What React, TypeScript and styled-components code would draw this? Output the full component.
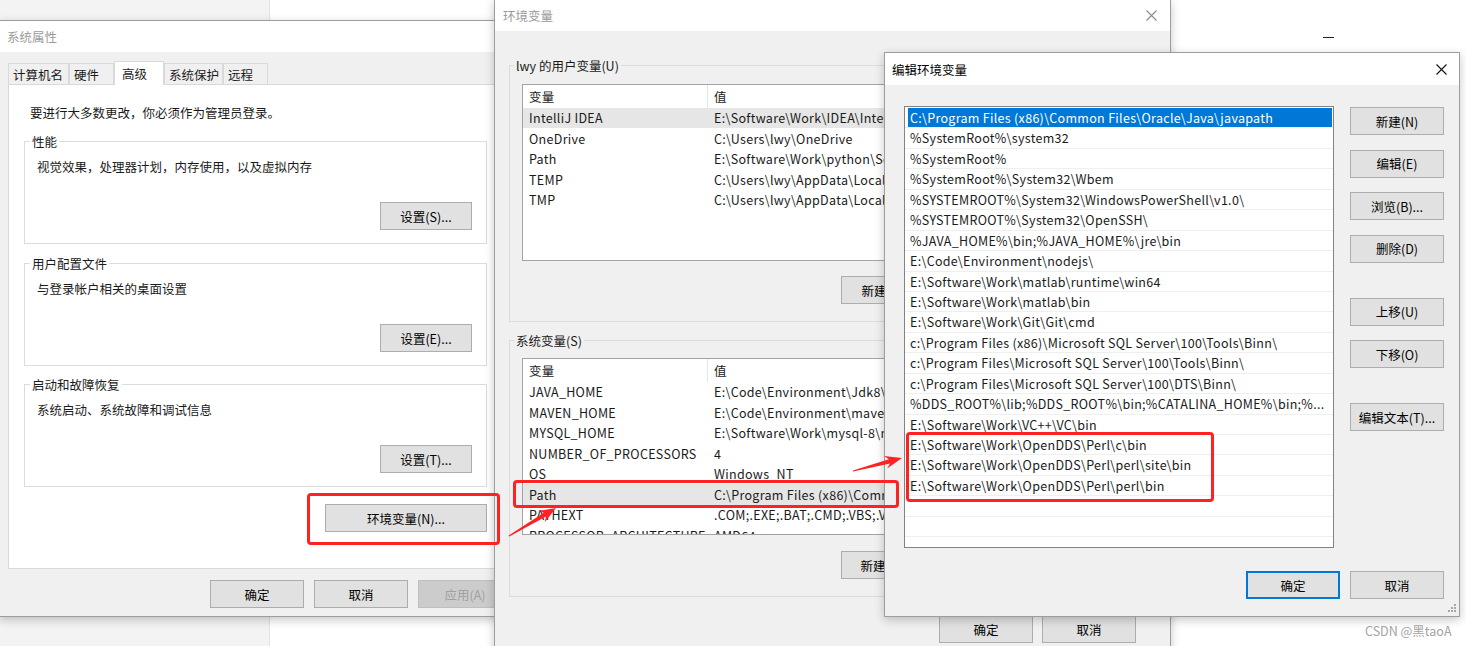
import React from "react";
import styled, { createGlobalStyle, css } from "styled-components";

const FONT = `"Noto Sans CJK SC", "Noto Sans", sans-serif`;

const GlobalStyle = createGlobalStyle`
  html, body { margin: 0; padding: 0; background: #fff; }
  body { font-family: ${FONT}; font-size: 12.5px; color: #1a1a1a; overflow: hidden; }
  #root { width: 1466px; height: 646px; }
  *, *::before, *::after { box-sizing: border-box; }
`;

/* Windows paths written with "/" and shown with "\" */
const w = (s: string) => s.replace(/\//g, "\\");

const Desktop = styled.div`
  position: relative;
  width: 1466px;
  height: 646px;
  overflow: hidden;
  background: #fff;
`;

/* ---------- background window ---------- */
const BackWindow = styled.div`
  position: absolute;
  inset: 0;
  display: flex;
`;
const BackSidebar = styled.div`
  width: 270px;
  background: #f3f3f3;
  border-right: 1px solid #e2e2e2;
`;
const BackMain = styled.div`
  flex: 1;
  display: flex;
  justify-content: flex-end;
  align-items: flex-start;
  padding: 37px 132px 0 0;
`;
const MinimizeGlyph = styled.div`
  width: 11px;
  height: 1px;
  background: #222;
`;

/* ---------- generic window ---------- */
const Window = styled.div<{ $x: number; $y: number; $w: number; $h: number; $z: number }>`
  position: absolute;
  left: ${(p) => p.$x}px;
  top: ${(p) => p.$y}px;
  width: ${(p) => p.$w}px;
  height: ${(p) => p.$h}px;
  z-index: ${(p) => p.$z};
  background: #f0f0f0;
  border: 1px solid #9d9d9d;
  box-shadow: 0 3px 9px rgba(0, 0, 0, 0.22);
  display: flex;
  flex-direction: column;
`;
const TitleBar = styled.div<{ $h: number; $pl: number; $pr: number }>`
  flex-shrink: 0;
  height: ${(p) => p.$h}px;
  background: #fff;
  display: flex;
  align-items: center;
  justify-content: space-between;
  padding: 0 ${(p) => p.$pr}px 0 ${(p) => p.$pl}px;
`;
const TitleText = styled.span<{ $active?: boolean }>`
  color: ${(p) => (p.$active ? "#000" : "#9a9a9a")};
  font-size: 12.5px;
  line-height: 17px;
`;
const CloseSvg = styled.svg`
  display: block;
  flex-shrink: 0;
`;
const CloseIcon = ({ color }: { color: string }) => (
  <CloseSvg width="11" height="11" viewBox="0 0 11 11">
    <path d="M0.5 0.5 L10.5 10.5 M10.5 0.5 L0.5 10.5" stroke={color} strokeWidth="1.1" fill="none" />
  </CloseSvg>
);

const Body = styled.div<{ $pad: string }>`
  flex: 1;
  display: flex;
  flex-direction: column;
  padding: ${(p) => p.$pad};
  min-height: 0;
`;

const Btn = styled.button<{ $w?: number; $default?: boolean }>`
  flex-shrink: 0;
  width: ${(p) => p.$w ?? 94}px;
  height: 28px;
  padding: 0;
  margin: 0;
  font-family: ${FONT};
  font-size: 12.5px;
  color: #000;
  background: #e1e1e1;
  border: 1px solid #adadad;
  ${(p) =>
    p.$default &&
    css`
      border-color: #0078d7;
      box-shadow: inset 0 0 0 1px #0078d7;
    `}
  &:disabled {
    background: #cccccc;
    border-color: #bfbfbf;
    color: #a0a0a0;
  }
`;

const ButtonBar = styled.div<{ $mt: number; $pr: number; $gap: number }>`
  display: flex;
  justify-content: flex-end;
  gap: ${(p) => p.$gap}px;
  margin-top: ${(p) => p.$mt}px;
  padding-right: ${(p) => p.$pr}px;
`;

const Group = styled.fieldset<{ $pad: string; $mt: number }>`
  margin: ${(p) => p.$mt}px 0 0 0;
  min-width: 0;
  padding: ${(p) => p.$pad};
  border: 1px solid #dcdcdc;
  display: flex;
  flex-direction: column;
`;
const Legend = styled.legend<{ $shift: number }>`
  padding: 0 2px;
  margin-left: ${(p) => p.$shift}px;
  line-height: 17px;
  font-size: 12.5px;
  color: #1a1a1a;
`;

/* ---------- window 1: 系统属性 ---------- */
const TabStrip = styled.div`
  display: flex;
  align-items: flex-end;
  height: 23px;
`;
const Tab = styled.div<{ $w: number; $active?: boolean }>`
  width: ${(p) => p.$w}px;
  height: ${(p) => (p.$active ? 24 : 21)}px;
  margin-bottom: ${(p) => (p.$active ? -1 : 0)}px;
  padding-left: ${(p) => (p.$active ? 7 : 4)}px;
  background: ${(p) => (p.$active ? "#fff" : "#f0f0f0")};
  border: 1px solid #d9d9d9;
  border-bottom: none;
  display: flex;
  align-items: center;
  white-space: nowrap;
  position: relative;
  z-index: ${(p) => (p.$active ? 2 : 0)};
`;
const TabPanel = styled.div`
  height: 485px;
  background: #fff;
  border: 1px solid #d9d9d9;
  padding: 19px 32px 0 15px;
  display: flex;
  flex-direction: column;
`;
const Line = styled.div<{ $mt?: number; $ml?: number }>`
  line-height: 17px;
  margin-top: ${(p) => p.$mt ?? 0}px;
  margin-left: ${(p) => p.$ml ?? 0}px;
  white-space: nowrap;
`;
const RightRow = styled.div<{ $mt: number }>`
  display: flex;
  justify-content: flex-end;
  margin-top: ${(p) => p.$mt}px;
`;

/* ---------- window 2: 环境变量 ---------- */
const VarList = styled.div<{ $mt: number }>`
  margin-top: ${(p) => p.$mt}px;
  height: 177px;
  background: #fff;
  border: 1px solid #a3a3a3;
  overflow: hidden;
  flex-shrink: 0;
`;
const VarRow = styled.div<{ $header?: boolean; $hl?: boolean }>`
  display: grid;
  grid-template-columns: 185px 1fr;
  height: ${(p) => (p.$header ? 22.5 : 20.5)}px;
  background: ${(p) => (p.$hl ? "#e6e6e6" : "transparent")};
`;
const VarCell = styled.div<{ $divider?: boolean }>`
  padding-left: 6px;
  display: flex;
  align-items: center;
  white-space: nowrap;
  overflow: hidden;
  letter-spacing: 0.3px;
  ${(p) =>
    p.$divider &&
    css`
      border-right: 1px solid #e5e5e5;
    `}
`;

/* ---------- window 3: 编辑环境变量 ---------- */
const MainRow = styled.div`
  display: flex;
  gap: 16px;
  align-items: flex-start;
`;
const PathList = styled.div`
  width: 430px;
  height: 442px;
  background: #fff;
  border: 1px solid #838383;
  padding-top: 1px;
  overflow: hidden;
  flex-shrink: 0;
`;
const PathRow = styled.div`
  height: 20.44px;
  border-bottom: 1px solid #efefef;
  padding: 0 1px 0 3px;
  display: flex;
`;
const PathText = styled.div<{ $sel?: boolean }>`
  flex: 1;
  padding-left: 2px;
  line-height: 19.44px;
  white-space: nowrap;
  overflow: hidden;
  letter-spacing: 0.3px;
  background: ${(p) => (p.$sel ? "#0078d7" : "transparent")};
  color: ${(p) => (p.$sel ? "#fff" : "#1a1a1a")};
`;
const ButtonColumn = styled.div`
  display: flex;
  flex-direction: column;
  gap: 35px;
  padding-top: 1px;
`;
const ButtonStack = styled.div`
  display: flex;
  flex-direction: column;
  gap: 14.6px;
`;
const GripSvg = styled.svg`
  position: absolute;
  right: 2px;
  bottom: 3px;
`;

/* ---------- annotations ---------- */
const RedBox = styled.div<{ $x: number; $y: number; $w: number; $h: number }>`
  position: absolute;
  left: ${(p) => p.$x}px;
  top: ${(p) => p.$y}px;
  width: ${(p) => p.$w}px;
  height: ${(p) => p.$h}px;
  border: 3px solid #ff2222;
  border-radius: 4px;
  z-index: 10;
  pointer-events: none;
`;
const ArrowLayer = styled.svg`
  position: absolute;
  inset: 0;
  z-index: 11;
  pointer-events: none;
`;
const Watermark = styled.div`
  position: absolute;
  left: 1365px;
  top: 622px;
  z-index: 12;
  color: #a3a3a3;
  font-size: 12.5px;
  line-height: 17px;
  white-space: nowrap;
`;

function arrowPoints(x1: number, y1: number, x2: number, y2: number): string {
  const dx = x2 - x1;
  const dy = y2 - y1;
  const len = Math.hypot(dx, dy);
  const ux = dx / len;
  const uy = dy / len;
  const nx = -uy;
  const ny = ux;
  const headLen = 17;
  const headW = 13;
  const neckW = 4.5;
  const tailW = 1;
  const nkx = x2 - ux * (headLen - 4);
  const nky = y2 - uy * (headLen - 4);
  const bx = x2 - ux * headLen;
  const by = y2 - uy * headLen;
  const pts: [number, number][] = [
    [x1 + (nx * tailW) / 2, y1 + (ny * tailW) / 2],
    [nkx + (nx * neckW) / 2, nky + (ny * neckW) / 2],
    [bx + (nx * headW) / 2, by + (ny * headW) / 2],
    [x2, y2],
    [bx - (nx * headW) / 2, by - (ny * headW) / 2],
    [nkx - (nx * neckW) / 2, nky - (ny * neckW) / 2],
    [x1 - (nx * tailW) / 2, y1 - (ny * tailW) / 2],
  ];
  return pts.map(([a, b]) => `${a.toFixed(1)},${b.toFixed(1)}`).join(" ");
}

/* ---------- data ---------- */
const tabs = [
  { label: "计算机名", w: 61 },
  { label: "硬件", w: 45 },
  { label: "高级", w: 50, active: true },
  { label: "系统保护", w: 59 },
  { label: "远程", w: 45 },
];

const perfGroups = [
  { title: "性能", desc: "视觉效果，处理器计划，内存使用，以及虚拟内存", btn: "设置(S)...", mt: 12 },
  { title: "用户配置文件", desc: "与登录帐户相关的桌面设置", btn: "设置(E)...", mt: 11 },
  { title: "启动和故障恢复", desc: "系统启动、系统故障和调试信息", btn: "设置(T)...", mt: 10 },
];

const userVars = [
  ["IntelliJ IDEA", w("E:/Software/Work/IDEA/IntelliJ IDEA 2020.1/bin;")],
  ["OneDrive", w("C:/Users/lwy/OneDrive")],
  ["Path", w("E:/Software/Work/python/Scripts/;E:/Software/Work/python/")],
  ["TEMP", w("C:/Users/lwy/AppData/Local/Temp")],
  ["TMP", w("C:/Users/lwy/AppData/Local/Temp")],
];

const sysVars = [
  ["JAVA_HOME", w("E:/Code/Environment/Jdk8/jdk1.8.0_202")],
  ["MAVEN_HOME", w("E:/Code/Environment/maven/apache-maven-3.6.3")],
  ["MYSQL_HOME", w("E:/Software/Work/mysql-8/mysql-8.0.22-winx64")],
  ["NUMBER_OF_PROCESSORS", "4"],
  ["OS", "Windows_NT"],
  ["Path", w("C:/Program Files (x86)/Common Files/Oracle/Java/javapath;")],
  ["PATHEXT", ".COM;.EXE;.BAT;.CMD;.VBS;.VBE;.JS;.JSE;.WSF;.WSH;.MSC"],
  ["PROCESSOR_ARCHITECTURE", "AMD64"],
];

const paths = [
  w("C:/Program Files (x86)/Common Files/Oracle/Java/javapath"),
  w("%SystemRoot%/system32"),
  w("%SystemRoot%"),
  w("%SystemRoot%/System32/Wbem"),
  w("%SYSTEMROOT%/System32/WindowsPowerShell/v1.0/"),
  w("%SYSTEMROOT%/System32/OpenSSH/"),
  w("%JAVA_HOME%/bin;%JAVA_HOME%/jre/bin"),
  w("E:/Code/Environment/nodejs/"),
  w("E:/Software/Work/matlab/runtime/win64"),
  w("E:/Software/Work/matlab/bin"),
  w("E:/Software/Work/Git/Git/cmd"),
  w("c:/Program Files (x86)/Microsoft SQL Server/100/Tools/Binn/"),
  w("c:/Program Files/Microsoft SQL Server/100/Tools/Binn/"),
  w("c:/Program Files/Microsoft SQL Server/100/DTS/Binn/"),
  w("%DDS_ROOT%/lib;%DDS_ROOT%/bin;%CATALINA_HOME%/bin;%..."),
  w("E:/Software/Work/VC++/VC/bin"),
  w("E:/Software/Work/OpenDDS/Perl/c/bin"),
  w("E:/Software/Work/OpenDDS/Perl/perl/site/bin"),
  w("E:/Software/Work/OpenDDS/Perl/perl/bin"),
  "",
  "",
];

function VarTable({ rows, hl, mt }: { rows: string[][]; hl: number; mt: number }) {
  return (
    <VarList $mt={mt}>
      <VarRow $header>
        <VarCell $divider>变量</VarCell>
        <VarCell>值</VarCell>
      </VarRow>
      {rows.map(([k, v], i) => (
        <VarRow key={k + i} $hl={i === hl}>
          <VarCell>{k}</VarCell>
          <VarCell>{v}</VarCell>
        </VarRow>
      ))}
    </VarList>
  );
}

export default function App() {
  return (
    <>
      <GlobalStyle />
      <Desktop>
        <BackWindow>
          <BackSidebar />
          <BackMain>
            <MinimizeGlyph />
          </BackMain>
        </BackWindow>

        {/* 系统属性 */}
        <Window $x={-1} $y={20} $w={530} $h={597} $z={1}>
          <TitleBar $h={31} $pl={7} $pr={12}>
            <TitleText>系统属性</TitleText>
          </TitleBar>
          <Body $pad="9px 8px 0 8px">
            <TabStrip>
              {tabs.map((t) => (
                <Tab key={t.label} $w={t.w} $active={t.active}>
                  {t.label}
                </Tab>
              ))}
            </TabStrip>
            <TabPanel>
              <Line $ml={6}>要进行大多数更改，你必须作为管理员登录。</Line>
              {perfGroups.map((g) => (
                <Group key={g.title} $pad="0 14px 13px 12px" $mt={g.mt}>
                  <Legend $shift={-7}>{g.title}</Legend>
                  <Line $mt={8}>{g.desc}</Line>
                  <RightRow $mt={27}>
                    <Btn $w={92}>{g.btn}</Btn>
                  </RightRow>
                </Group>
              ))}
              <RightRow $mt={17}>
                <Btn $w={162}>环境变量(N)...</Btn>
              </RightRow>
            </TabPanel>
            <ButtonBar $mt={11} $pr={8} $gap={10}>
              <Btn>确定</Btn>
              <Btn>取消</Btn>
              <Btn disabled>应用(A)</Btn>
            </ButtonBar>
          </Body>
        </Window>

        {/* 环境变量 */}
        <Window $x={494} $y={-1} $w={677} $h={662} $z={2}>
          <TitleBar $h={31} $pl={8} $pr={13}>
            <TitleText>环境变量</TitleText>
            <CloseIcon color="#8a8a8a" />
          </TitleBar>
          <Body $pad="26px 14px 0 14px">
            <Group $pad="0 12px 17px 12px" $mt={0}>
              <Legend $shift={-8}>lwy 的用户变量(U)</Legend>
              <VarTable rows={userVars} hl={0} mt={10} />
              <ButtonBar $mt={15} $pr={0} $gap={10}>
                <Btn>新建(N)...</Btn>
                <Btn>编辑(E)...</Btn>
                <Btn>删除(D)</Btn>
              </ButtonBar>
            </Group>
            <Group $pad="0 12px 17px 12px" $mt={10}>
              <Legend $shift={-8}>系统变量(S)</Legend>
              <VarTable rows={sysVars} hl={5} mt={9} />
              <ButtonBar $mt={16} $pr={0} $gap={10}>
                <Btn>新建(W)...</Btn>
                <Btn>编辑(I)...</Btn>
                <Btn>删除(L)</Btn>
              </ButtonBar>
            </Group>
            <ButtonBar $mt={18} $pr={20} $gap={9}>
              <Btn>确定</Btn>
              <Btn>取消</Btn>
            </ButtonBar>
          </Body>
        </Window>

        {/* 编辑环境变量 */}
        <Window $x={884} $y={52} $w={576} $h={565} $z={3}>
          <TitleBar $h={32} $pl={7} $pr={12}>
            <TitleText $active>编辑环境变量</TitleText>
            <CloseIcon color="#111" />
          </TitleBar>
          <Body $pad="21px 15px 0 19px">
            <MainRow>
              <PathList>
                {paths.map((p, i) => (
                  <PathRow key={i}>
                    <PathText $sel={i === 0}>{p}</PathText>
                  </PathRow>
                ))}
              </PathList>
              <ButtonColumn>
                <ButtonStack>
                  <Btn>新建(N)</Btn>
                  <Btn>编辑(E)</Btn>
                  <Btn>浏览(B)...</Btn>
                  <Btn>删除(D)</Btn>
                </ButtonStack>
                <ButtonStack>
                  <Btn>上移(U)</Btn>
                  <Btn>下移(O)</Btn>
                </ButtonStack>
                <ButtonStack>
                  <Btn>编辑文本(T)...</Btn>
                </ButtonStack>
              </ButtonColumn>
            </MainRow>
            <ButtonBar $mt={23} $pr={0} $gap={10}>
              <Btn $default>确定</Btn>
              <Btn>取消</Btn>
            </ButtonBar>
          </Body>
          <GripSvg width="10" height="10" viewBox="0 0 10 10">
            {[
              [8, 2],
              [5, 5],
              [8, 5],
              [2, 8],
              [5, 8],
              [8, 8],
            ].map(([x, y]) => (
              <rect key={`${x}-${y}`} x={x - 1} y={y - 1} width="2" height="2" fill="#a8a8a8" />
            ))}
          </GripSvg>
        </Window>

        <RedBox $x={307} $y={493} $w={193} $h={52} />
        <RedBox $x={513} $y={480} $w={386} $h={28} />
        <RedBox $x={906} $y={432} $w={308} $h={70} />

        <ArrowLayer width="1466" height="646" viewBox="0 0 1466 646">
          <polygon points={arrowPoints(509, 536, 556, 508)} fill="#ff2222" />
          <polygon points={arrowPoints(853, 471, 902, 458)} fill="#ff2222" />
        </ArrowLayer>

        <Watermark>CSDN @黑taoA</Watermark>
      </Desktop>
    </>
  );
}
